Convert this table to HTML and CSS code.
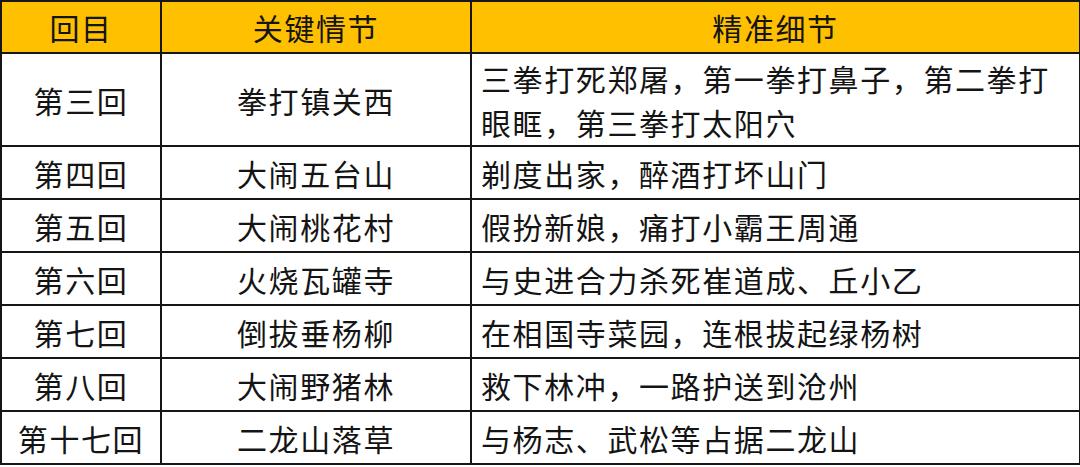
FILE: index.html
```html
<!DOCTYPE html>
<html lang="zh-CN">
<head>
<meta charset="utf-8">
<title>鲁智深</title>
<link rel="stylesheet" href="styles.css">
</head>
<body>
<table class="grid">
  <colgroup>
    <col class="c1">
    <col class="c2">
    <col class="c3">
  </colgroup>
  <thead>
    <tr class="head">
      <th>回目</th>
      <th>关键情节</th>
      <th>精准细节</th>
    </tr>
  </thead>
  <tbody>
    <tr class="tall">
      <td>第三回</td>
      <td>拳打镇关西</td>
      <td class="detail">三拳打死郑屠，第一拳打鼻子，第二拳打眼眶，第三拳打太阳穴</td>
    </tr>
    <tr>
      <td>第四回</td>
      <td>大闹五台山</td>
      <td class="detail">剃度出家，醉酒打坏山门</td>
    </tr>
    <tr>
      <td>第五回</td>
      <td>大闹桃花村</td>
      <td class="detail">假扮新娘，痛打小霸王周通</td>
    </tr>
    <tr>
      <td>第六回</td>
      <td>火烧瓦罐寺</td>
      <td class="detail">与史进合力杀死崔道成、丘小乙</td>
    </tr>
    <tr>
      <td>第七回</td>
      <td>倒拔垂杨柳</td>
      <td class="detail">在相国寺菜园，连根拔起绿杨树</td>
    </tr>
    <tr>
      <td>第八回</td>
      <td>大闹野猪林</td>
      <td class="detail">救下林冲，一路护送到沧州</td>
    </tr>
    <tr>
      <td>第十七回</td>
      <td>二龙山落草</td>
      <td class="detail">与杨志、武松等占据二龙山</td>
    </tr>
  </tbody>
</table>
</body>
</html>
```
FILE: styles.css
```css
html, body {
  margin: 0;
  padding: 0;
  background: #ffffff;
}

body {
  font-family: "Noto Sans CJK SC", "Noto Sans", sans-serif;
  color: #141414;
}

.grid {
  border-collapse: collapse;
  table-layout: fixed;
  width: 1079px;
  margin: 0;
}

.c1 { width: 160px; }
.c2 { width: 310px; }
.c3 { width: 609px; }

.grid th,
.grid td {
  border: 2px solid #161616;
  font-size: 30px;
  font-weight: 400;
  letter-spacing: 1.6px;
  line-height: 44px;
  padding: 0 6px;
  text-align: center;
  vertical-align: middle;
  height: 53px;
  box-sizing: border-box;
}

.head th {
  background: #ffc000;
  height: 52px;
}

.tall td {
  height: 93px;
}

.grid td.detail {
  text-align: left;
  padding-left: 9px;
  padding-right: 10px;
}
```
